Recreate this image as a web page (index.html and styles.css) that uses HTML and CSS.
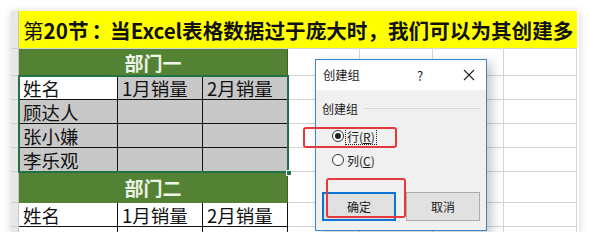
FILE: index.html
```html
<!DOCTYPE html>
<html lang="zh-CN">
<head>
    <meta charset="UTF-8">
    <title>创建组</title>
    <link rel="stylesheet" href="styles.css">
</head>
<body>
    <div id="shot">
        <div class="sheet">
            <div class="rh"></div>
            <div class="banner"><span class="light">第</span>20节<span class="colon">：</span>当Excel表格数据过于庞大时，我们可以为其创建多</div>

            <div class="rh"></div>
            <div class="dept">部门一</div>
            <div class="c"></div><div class="c"></div><div class="c"></div><div class="c"></div>

            <div class="rh"></div>
            <div class="c t active">姓名</div><div class="c t sel">1月销量</div><div class="c t sel">2月销量</div>
            <div class="c"></div><div class="c"></div><div class="c"></div><div class="c"></div>

            <div class="rh"></div>
            <div class="c t sel">顾达人</div><div class="c t sel"></div><div class="c t sel"></div>
            <div class="c"></div><div class="c"></div><div class="c"></div><div class="c"></div>

            <div class="rh"></div>
            <div class="c t sel">张小嫌</div><div class="c t sel"></div><div class="c t sel"></div>
            <div class="c"></div><div class="c"></div><div class="c"></div><div class="c"></div>

            <div class="rh"></div>
            <div class="c t sel">李乐观</div><div class="c t sel"></div><div class="c t sel"></div>
            <div class="c"></div><div class="c"></div><div class="c"></div><div class="c"></div>

            <div class="rh"></div>
            <div class="dept">部门二</div>
            <div class="c"></div><div class="c"></div><div class="c"></div><div class="c"></div>

            <div class="rh"></div>
            <div class="c t">姓名</div><div class="c t">1月销量</div><div class="c t">2月销量</div>
            <div class="c"></div><div class="c"></div><div class="c"></div><div class="c"></div>

            <div class="rh"></div>
            <div class="c t"></div><div class="c t"></div><div class="c t"></div>
            <div class="c"></div><div class="c"></div><div class="c"></div><div class="c"></div>
        </div>

        <div class="selection"><span class="handle"></span></div>

        <div class="dialog">
            <div class="dlg-title">
                <span class="dlg-name">创建组</span>
                <span class="dlg-help">?</span>
                <span class="dlg-close">
                    <svg width="12" height="12" viewBox="0 0 12 12"><path d="M1 1L11 11M11 1L1 11" stroke="#222" stroke-width="1.1" fill="none"/></svg>
                </span>
            </div>
            <div class="dlg-body">
                <div class="group">
                    <span>创建组</span>
                    <i class="group-line"></i>
                </div>
                <div class="radio checked"><span class="dot"></span><span class="lbl focus">行(<u>R</u>)</span></div>
                <div class="radio"><span class="dot"></span><span class="lbl">列(<u>C</u>)</span></div>
                <div class="buttons">
                    <div class="btn default">确定</div>
                    <div class="btn">取消</div>
                </div>
            </div>
        </div>

        <div class="mark mark-row"></div>
        <div class="mark mark-ok"></div>
    </div>
</body>
</html>
```

FILE: styles.css
```css
*{
    margin: 0;
    padding: 0;
    box-sizing: border-box;
}
body{
    background: #fff;
    font-family: "Noto Sans CJK SC", "Noto Sans", sans-serif;
}
#shot{
    position: relative;
    margin: 11px 0 0 11px;
    width: 568px;
    height: 221px;
    overflow: hidden;
    background: #fff;
    box-shadow: 0 1px 8px rgba(0,0,0,0.18);
}
.sheet{
    display: grid;
    grid-template-columns: 8px 99px 85px 85px 72px 73px 71px 73px;
    grid-template-rows: 38px 27px 24px 24px 24px 24px 31px 24px 24px;
}
.rh{
    background: #e8e8e8;
    border-right: 1px solid #c4c4c4;
    border-bottom: 1px solid #d0d0d0;
}
.banner{
    grid-column: span 7;
    background: #ffff00;
    border-bottom: 1px solid #d4d4d4;
    padding-left: 4px;
    font-size: 20.6px;
    font-weight: bold;
    color: #111;
    white-space: nowrap;
    overflow: hidden;
    display: flex;
    align-items: center;
}
.banner .light{
    font-weight: normal;
}
.banner .colon{
    margin-left: 3px;
    margin-right: -2px;
}
.dept{
    grid-column: span 3;
    background: #548235;
    color: #eef4e8;
    font-size: 19px;
    font-weight: bold;
    display: flex;
    align-items: center;
    justify-content: center;
    border-right: 1px solid #3f6127;
}
.c{
    border-right: 1px solid #d4d4d4;
    border-bottom: 1px solid #d4d4d4;
}
.c.t{
    border-right: 1px solid #111;
    border-bottom: 1px solid #111;
    font-size: 18.5px;
    color: #111;
    padding-left: 4px;
    display: flex;
    align-items: center;
    white-space: nowrap;
    overflow: hidden;
}
.sel{
    background: #c8c8c8;
}
.active{
    background: #fff;
}
.selection{
    position: absolute;
    left: 7px;
    top: 64px;
    width: 271px;
    height: 98px;
    border: 2px solid #217346;
}
.handle{
    position: absolute;
    right: -5px;
    bottom: -5px;
    width: 6px;
    height: 6px;
    background: #217346;
    border: 1px solid #fff;
}
.dialog{
    position: absolute;
    left: 304px;
    top: 48px;
    width: 172px;
    height: 172px;
    border: 1px solid #3a86c8;
    background: #f0f0f0;
    box-shadow: 5px 4px 10px rgba(0,0,0,0.22);
    font-size: 12px;
    color: #1a1a1a;
}
.dlg-title{
    height: 30px;
    background: #fff;
    display: flex;
    align-items: center;
    padding-left: 7px;
}
.dlg-name{
    width: 94px;
    font-size: 12.3px;
}
.dlg-help{
    width: 46px;
    font-size: 13px;
}
.dlg-close{
    display: flex;
    align-items: center;
}
.dlg-body{
    padding: 10px 6px 0 6px;
}
.group{
    display: flex;
    align-items: center;
    height: 16px;
    gap: 6px;
}
.group-line{
    flex: 1;
    height: 1px;
    background: #d8d8d8;
}
.radio{
    display: flex;
    align-items: center;
    height: 20px;
    margin-top: 4px;
    padding-left: 10px;
}
.group + .radio{
    margin-top: 10px;
}
.dot{
    position: relative;
    width: 12px;
    height: 12px;
    border: 1px solid #333;
    border-radius: 50%;
    background: #fff;
}
.checked .dot::after{
    content: "";
    position: absolute;
    left: 2px;
    top: 2px;
    width: 6px;
    height: 6px;
    border-radius: 50%;
    background: #222;
}
.lbl{
    margin-left: 2px;
    padding: 0 1px;
    line-height: 15px;
    font-size: 12px;
}
.focus{
    outline: 1px dotted #222;
}
.buttons{
    display: flex;
    gap: 10px;
    margin-top: 22px;
}
.btn{
    width: 74px;
    height: 29px;
    border: 1px solid #adadad;
    background: #e1e1e1;
    display: flex;
    align-items: center;
    justify-content: center;
    font-size: 12px;
}
.btn.default{
    border: 2px solid #0a74d6;
}
.mark{
    position: absolute;
    border: 2px solid #e6393d;
    border-radius: 3px;
}
.mark-row{
    left: 292px;
    top: 116px;
    width: 94px;
    height: 21px;
}
.mark-ok{
    left: 315px;
    top: 167px;
    width: 80px;
    height: 40px;
}
```
